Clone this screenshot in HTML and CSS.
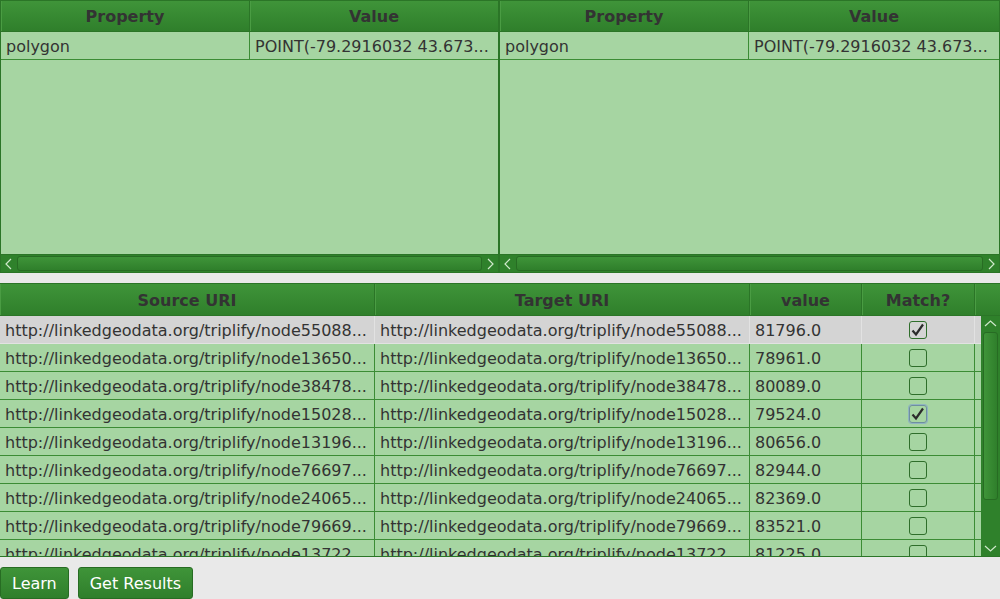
FILE: index.html
```html
<!DOCTYPE html>
<html>
<head>
<meta charset="utf-8">
<link rel="stylesheet" href="styles.css">
</head>
<body>
<div class="app">
  <div class="top">
    <div class="pane pane-left">
      <div class="thead"><div class="th c-prop">Property</div><div class="th c-val">Value</div></div>
      <div class="tr"><div class="td c-prop">polygon</div><div class="td c-val">POINT(-79.2916032 43.673...</div></div>
      <div class="empty"></div>
      <div class="hscroll">
        <svg class="arrow" width="16" height="18" viewBox="0 0 16 18"><polyline points="10,4 5,9 10,14" fill="none" stroke="#cfe8cb" stroke-width="1.2"/></svg>
        <div class="hthumb"></div>
        <svg class="arrow" width="16" height="18" viewBox="0 0 16 18"><polyline points="6,4 11,9 6,14" fill="none" stroke="#cfe8cb" stroke-width="1.2"/></svg>
      </div>
    </div>
    <div class="pane pane-right">
      <div class="thead"><div class="th c-prop">Property</div><div class="th c-val">Value</div></div>
      <div class="tr"><div class="td c-prop">polygon</div><div class="td c-val">POINT(-79.2916032 43.673...</div></div>
      <div class="empty"></div>
      <div class="hscroll">
        <svg class="arrow" width="16" height="18" viewBox="0 0 16 18"><polyline points="10,4 5,9 10,14" fill="none" stroke="#cfe8cb" stroke-width="1.2"/></svg>
        <div class="hthumb"></div>
        <svg class="arrow" width="16" height="18" viewBox="0 0 16 18"><polyline points="6,4 11,9 6,14" fill="none" stroke="#cfe8cb" stroke-width="1.2"/></svg>
      </div>
    </div>
  </div>

  <div class="results">
    <div class="rhead">
      <div class="th">Source URI</div>
      <div class="th">Target URI</div>
      <div class="th">value</div>
      <div class="th">Match?</div>
      <div class="th th-last"></div>
    </div>
    <div class="rbody">
      <div class="rows">
        <div class="rrow selected"><div class="td">http://linkedgeodata.org/triplify/node55088...</div><div class="td">http://linkedgeodata.org/triplify/node55088...</div><div class="td">81796.0</div><div class="td tc"><span class="cb checked"><svg width="16" height="16" viewBox="0 0 16 16"><polyline points="2.5,8.5 6,12.5 13,2.5" fill="none" stroke="#2b2b2b" stroke-width="2.2"/></svg></span></div><div class="td fill"></div></div>
        <div class="rrow"><div class="td">http://linkedgeodata.org/triplify/node13650...</div><div class="td">http://linkedgeodata.org/triplify/node13650...</div><div class="td">78961.0</div><div class="td tc"><span class="cb"></span></div><div class="td fill"></div></div>
        <div class="rrow"><div class="td">http://linkedgeodata.org/triplify/node38478...</div><div class="td">http://linkedgeodata.org/triplify/node38478...</div><div class="td">80089.0</div><div class="td tc"><span class="cb"></span></div><div class="td fill"></div></div>
        <div class="rrow"><div class="td">http://linkedgeodata.org/triplify/node15028...</div><div class="td">http://linkedgeodata.org/triplify/node15028...</div><div class="td">79524.0</div><div class="td tc"><span class="cb checked focus"><svg width="16" height="16" viewBox="0 0 16 16"><polyline points="2.5,8.5 6,12.5 13,2.5" fill="none" stroke="#2b2b2b" stroke-width="2.2"/></svg></span></div><div class="td fill"></div></div>
        <div class="rrow"><div class="td">http://linkedgeodata.org/triplify/node13196...</div><div class="td">http://linkedgeodata.org/triplify/node13196...</div><div class="td">80656.0</div><div class="td tc"><span class="cb"></span></div><div class="td fill"></div></div>
        <div class="rrow"><div class="td">http://linkedgeodata.org/triplify/node76697...</div><div class="td">http://linkedgeodata.org/triplify/node76697...</div><div class="td">82944.0</div><div class="td tc"><span class="cb"></span></div><div class="td fill"></div></div>
        <div class="rrow"><div class="td">http://linkedgeodata.org/triplify/node24065...</div><div class="td">http://linkedgeodata.org/triplify/node24065...</div><div class="td">82369.0</div><div class="td tc"><span class="cb"></span></div><div class="td fill"></div></div>
        <div class="rrow"><div class="td">http://linkedgeodata.org/triplify/node79669...</div><div class="td">http://linkedgeodata.org/triplify/node79669...</div><div class="td">83521.0</div><div class="td tc"><span class="cb"></span></div><div class="td fill"></div></div>
        <div class="rrow"><div class="td">http://linkedgeodata.org/triplify/node13722...</div><div class="td">http://linkedgeodata.org/triplify/node13722...</div><div class="td">81225.0</div><div class="td tc"><span class="cb"></span></div><div class="td fill"></div></div>
      </div>
      <div class="vscroll">
        <svg class="varrow" width="19" height="14" viewBox="0 0 19 14"><polyline points="4,10 9.5,5 15,10" fill="none" stroke="#cfe8cb" stroke-width="1.2"/></svg>
        <div class="vthumb"></div>
        <div class="vspace"></div>
        <svg class="varrow" width="19" height="14" viewBox="0 0 19 14"><polyline points="4,4 9.5,9 15,4" fill="none" stroke="#cfe8cb" stroke-width="1.2"/></svg>
      </div>
    </div>
  </div>

  <div class="buttons">
    <button class="btn">Learn</button>
    <button class="btn">Get Results</button>
  </div>
</div>
</body>
</html>
```
FILE: styles.css
```css
* { box-sizing: border-box; }
html, body { margin: 0; padding: 0; }
body {
  background: #e9e9e9;
  font-family: "DejaVu Sans", "Liberation Sans", sans-serif;
  font-size: 16px;
  color: #333;
  width: 1000px;
  height: 599px;
  overflow: hidden;
}
.app { display: flex; flex-direction: column; }

.top { display: flex; height: 273px; }
.pane {
  width: 500px;
  display: flex;
  flex-direction: column;
  border: 1px solid #2b7527;
  background: #a6d5a2;
}
.pane-left { border-right-width: 2px; }
.pane-right { border-left: none; }

.thead {
  display: flex;
  height: 31px;
  border-bottom: 1px solid #2b7527;
  background: linear-gradient(#3f9439, #2f7f2b);
}
.th {
  font-weight: bold;
  color: #333;
  display: flex;
  align-items: center;
  justify-content: center;
  padding-top: 1px;
  border-right: 1px solid #2b7527;
  box-shadow: inset 1px 0 0 #4a9c43;
}
.pane .c-prop { width: 249px; }
.pane .c-val { flex: 1; border-right: none; }
.pane-right .c-val { width: 250px; }

.tr {
  display: flex;
  height: 28px;
  border-bottom: 1px solid #3c8c35;
}
.td {
  display: flex;
  align-items: center;
  padding-left: 5px;
  padding-top: 2px;
  white-space: nowrap;
  overflow: hidden;
  color: #333;
  border-right: 1px solid #3c8c35;
}
.tr .c-val { border-right: none; }
.empty { flex: 1; }

.hscroll {
  height: 18px;
  display: flex;
  align-items: center;
  background: #2f812b;
  border-top: 1px solid #2b7527;
}
.hscroll .arrow { flex: none; }
.hthumb {
  flex: 1;
  height: 15px;
  border: 1px solid #276c23;
  border-radius: 3px;
  background: linear-gradient(#3f9439, #2f7f2b);
}

.results {
  margin-top: 10px;
  border-top: 1px solid #2b7527;
  border-bottom: 1px solid #2b7527;
  display: flex;
  flex-direction: column;
}
.rhead {
  display: grid;
  grid-template-columns: 375px 375px 112px 113px 25px;
  height: 32px;
  border-bottom: 1px solid #2b7527;
  background: linear-gradient(#3f9439, #2f7f2b);
}
.rhead .th-last { border-right: none; }
.rbody {
  display: flex;
  height: 240px;
  overflow: hidden;
}
.rows { width: 981px; background: #a6d5a2; }
.rrow {
  display: grid;
  grid-template-columns: 375px 375px 112px 113px 6px;
  height: 28px;
  border-bottom: 1px solid #3c8c35;
}
.rrow .fill { border-right: none; padding: 0; }
.rrow.selected { background: #d4d4d4; border-bottom-color: #e2e2e2; }
.rrow.selected .td { border-right-color: #e2e2e2; }
.rrow .tc { justify-content: center; padding-left: 0; padding-top: 0; }

.cb {
  width: 18px;
  height: 18px;
  border: 1.5px solid #2f6e2b;
  border-radius: 3px;
  display: flex;
  align-items: center;
  justify-content: center;
}
.cb.focus { border-color: #6e8fa0; box-shadow: 0 0 0 1px #8fb3c0; }

.vscroll {
  width: 19px;
  display: flex;
  flex-direction: column;
  align-items: center;
  background: #2f812b;
}
.varrow { flex: none; }
.vthumb {
  width: 15px;
  height: 168px;
  margin-top: 2px;
  border: 1px solid #276c23;
  border-radius: 3px;
  background: linear-gradient(90deg, #3f9439, #2f7f2b);
}
.vspace { flex: 1; }

.buttons {
  display: flex;
  gap: 9px;
  margin-top: 10px;
}
.btn {
  font-family: "DejaVu Sans", "Liberation Sans", sans-serif;
  font-size: 16px;
  color: #fff;
  height: 32px;
  padding: 0 11px;
  border: 1px solid #276c23;
  border-radius: 3px;
  background: linear-gradient(#3f9439, #2f7f2b);
}
```
